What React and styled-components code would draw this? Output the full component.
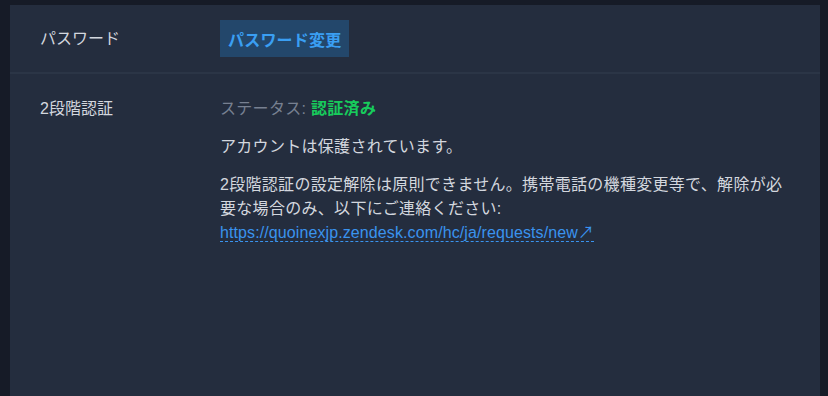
import styled, { createGlobalStyle } from "styled-components";

const GlobalStyle = createGlobalStyle`
  html, body, #root {
    height: 100%;
  }
  body {
    margin: 0;
    background: #161b27;
    font-family: "Liberation Sans", "Noto Sans CJK JP", sans-serif;
    overflow: hidden;
  }
`;

const Page = styled.div`
  height: 100%;
  box-sizing: border-box;
  padding: 5px 8px 0 10px;
  display: flex;
`;

const Panel = styled.section`
  flex: 1;
  background: #242d3e;
  display: flex;
  flex-direction: column;
`;

const Row = styled.div`
  display: flex;
  align-items: ${(p) => (p.$top ? "flex-start" : "center")};
  padding: ${(p) => p.$pad};
  border-bottom: ${(p) => (p.$divider ? "2px solid #2b3546" : "none")};
`;

const Label = styled.div`
  width: 180px;
  flex-shrink: 0;
  font-size: 16px;
  line-height: 24px;
  color: #d3d7de;
`;

const Content = styled.div`
  flex: 1;
  max-width: 570px;
  font-size: 16px;
  line-height: 24px;
  letter-spacing: 0.3px;
  color: #d3d7de;
`;

const Button = styled.button`
  height: 37px;
  padding: 0 8px;
  border: none;
  background: #23476b;
  color: #3a9ff3;
  font-family: inherit;
  font-size: 16px;
  font-weight: bold;
  letter-spacing: 0.2px;
  cursor: pointer;
`;

const Status = styled.div`
  color: #778091;
`;

const Verified = styled.span`
  color: #17cc5c;
  font-weight: bold;
`;

const Text = styled.p`
  margin: 14px 0 0;
`;

const Link = styled.a`
  color: #3a93ee;
  letter-spacing: 0.1px;
  text-decoration: none;
  border-bottom: 1px dashed #3a93ee;
`;

export default function App() {
  return (
    <>
      <GlobalStyle />
      <Page>
        <Panel>
          <Row $pad="15px 30px" $divider>
            <Label>パスワード</Label>
            <Button>パスワード変更</Button>
          </Row>
          <Row $pad="23px 30px" $top>
            <Label>2段階認証</Label>
            <Content>
              <Status>
                ステータス: <Verified>認証済み</Verified>
              </Status>
              <Text>アカウントは保護されています。</Text>
              <Text>
                2段階認証の設定解除は原則できません。携帯電話の機種変更等で、解除が必要な場合のみ、以下にご連絡ください:
                <br />
                <Link href="#">https://quoinexjp.zendesk.com/hc/ja/requests/new↗</Link>
              </Text>
            </Content>
          </Row>
        </Panel>
      </Page>
    </>
  );
}
